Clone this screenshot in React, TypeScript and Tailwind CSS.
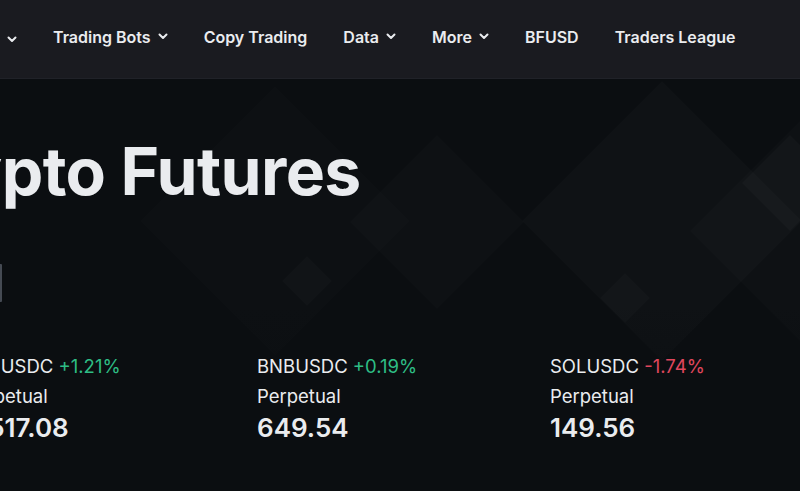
import React from "react";

const font = { fontFamily: "Inter, 'Noto Sans', sans-serif" };

function Chevron() {
  return (
    <svg width="10" height="7" viewBox="0 0 10 7" className="shrink-0">
      <path d="M1.5 1.5 5 5l3.5-3.5" fill="none" stroke="#eaecef" strokeWidth="2" strokeLinecap="round" strokeLinejoin="round" />
    </svg>
  );
}

const navItems = [
  { label: "Trading Bots", menu: true },
  { label: "Copy Trading", menu: false },
  { label: "Data", menu: true },
  { label: "More", menu: true },
  { label: "BFUSD", menu: false },
  { label: "Traders League", menu: false },
];

const tickers = [
  { sym: "ETHUSDC", chg: "+1.21%", up: true, price: "2,517.08" },
  { sym: "BNBUSDC", chg: "+0.19%", up: true, price: "649.54" },
  { sym: "SOLUSDC", chg: "-1.74%", up: false, price: "149.56" },
];

// diamond: cx, cy, half diagonal, fill
const diamonds = [
  [275, 142, 135, "rgba(255,255,255,0.012)"],
  [437, 143, 87, "rgba(255,255,255,0.014)"],
  [662, 142, 140, "rgba(255,255,255,0.02)"],
  [830, 152, 140, "rgba(255,255,255,0.016)"],
  [790, 104, 48, "rgba(255,255,255,0.025)"],
  [307, 202, 25, "rgba(255,255,255,0.018)"],
  [625, 219, 25, "rgba(255,255,255,0.018)"],
];

function Backdrop() {
  return (
    <svg className="absolute inset-0 w-full h-full" viewBox="0 0 800 412" preserveAspectRatio="none">
      <defs>
        <linearGradient id="fade" x1="0" y1="0" x2="0" y2="1">
          <stop offset="0.55" stopColor="#0b0e11" stopOpacity="0" />
          <stop offset="0.9" stopColor="#0b0e11" stopOpacity="1" />
        </linearGradient>
      </defs>
      {diamonds.map(([cx, cy, h, f], i) => (
        <polygon
          key={i}
          points={`${cx},${cy - h} ${cx + h},${cy} ${cx},${cy + h} ${cx - h},${cy}`}
          fill={f}
        />
      ))}
      <rect x="0" y="0" width="800" height="412" fill="url(#fade)" />
    </svg>
  );
}

export default function App() {
  return (
    <div className="w-[800px] h-[491px] overflow-hidden bg-[#0b0e11] text-[#eaecef]" style={font}>
      <nav className="h-[79px] bg-[#1a1b20] border-b border-[#202228] flex items-center gap-[36px] pl-[7px]">
        <Chevron />
        {navItems.map((n) => (
          <div key={n.label} className="flex items-center gap-[7px] text-[16px] font-semibold leading-none whitespace-nowrap pb-[5px]">
            <span>{n.label}</span>
            {n.menu && <Chevron />}
          </div>
        ))}
      </nav>

      <section className="relative h-[412px] overflow-hidden">
        <Backdrop />
        <div className="relative ml-[-113px] pt-[52px]">
          <h1 className="text-[66px] font-bold leading-[80px] tracking-[-0.6px] text-[#eaecef] whitespace-nowrap">
            Crypto Futures
          </h1>
          <div className="flex mt-[53px] ml-[113px]">
            <div className="w-[2px] h-[38px] bg-[#454a53] rounded-r-[1px]" />
          </div>
          <div className="flex ml-[77px] mt-[51px]">
            {tickers.map((t) => (
              <div key={t.sym} className="w-[293px] shrink-0 flex flex-col">
                <div className="text-[18.5px] leading-[26px] whitespace-nowrap">
                  {t.sym}{" "}
                  <span className={t.up ? "text-[#2ebd85]" : "text-[#e0475d]"}>{t.chg}</span>
                </div>
                <div className="text-[18.5px] leading-[26px] mt-[4px]">Perpetual</div>
                <div className="text-[26px] font-semibold leading-[34px] mt-[2px] whitespace-nowrap">{t.price}</div>
              </div>
            ))}
          </div>
        </div>
      </section>
    </div>
  );
}
